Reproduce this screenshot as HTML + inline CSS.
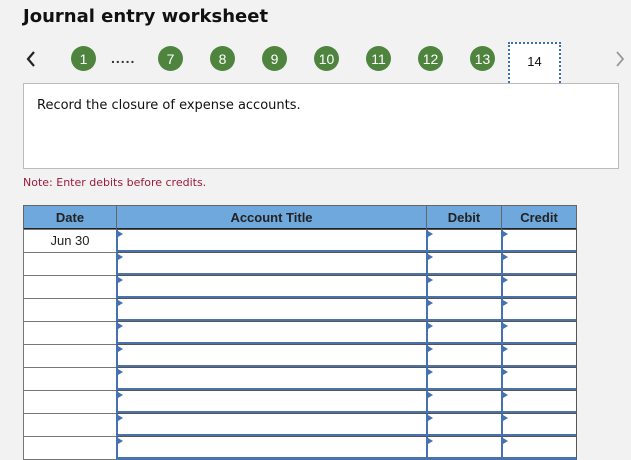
<!DOCTYPE html>
<html><head><meta charset="utf-8"><style>
*{box-sizing:border-box;margin:0;padding:0}
body{width:631px;height:459px;background:#f2f2f2;position:relative;overflow:hidden;font-family:"DejaVu Sans",Verdana,sans-serif}
.a{position:absolute}
.t{left:23px;top:6px;font-weight:bold;font-size:18px;color:#111}
.c{width:25px;height:25px;border-radius:50%;background:#4e843e;color:#fff;font:14px "Liberation Sans",sans-serif;display:flex;align-items:center;justify-content:center;top:46px}
.box{left:23px;top:83px;width:596px;height:86px;background:#fff;border:1px solid #bbb}
.hd{background:#6fa8dc;font:bold 13px "Liberation Sans",sans-serif;color:#222;text-align:center;line-height:23px;border:1px solid #666;border-right:1px solid #222;border-bottom:2px solid #222}
.dc{background:#fff;border:1px solid #777}
.in{background:#fff;border:1px solid #555;border-left:2px solid #4472b4;border-bottom:3px solid #4a72ad}
.in:before{content:"";position:absolute;left:0;top:1px;border-left:5px solid #4472b4;border-top:3px solid transparent;border-bottom:3px solid transparent}
</style></head><body>
<div class="a t">Journal entry worksheet</div>
<svg class="a" style="left:26px;top:51px" width="10" height="16"><path d="M8 1 L2 8 L8 15" fill="none" stroke="#222" stroke-width="2.2"/></svg>
<svg class="a" style="left:615px;top:51px" width="10" height="16"><path d="M2 1 L8 8 L2 15" fill="none" stroke="#999" stroke-width="1.8"/></svg>
<div class="a c" style="left:71px">1</div>
<div class="a" style="left:111px;top:50px;font:bold 14px 'Liberation Sans',sans-serif;color:#333;letter-spacing:1px">.....</div>
<div class="a c" style="left:158px">7</div>
<div class="a c" style="left:210px">8</div>
<div class="a c" style="left:262px">9</div>
<div class="a c" style="left:314px">10</div>
<div class="a c" style="left:366px">11</div>
<div class="a c" style="left:418px">12</div>
<div class="a c" style="left:470px">13</div>
<div class="a" style="left:508px;top:42px;width:53px;height:44px;background:#fff;border:2px dotted #3d6db5;font:13px 'Liberation Sans',sans-serif;text-align:center;line-height:36px;color:#111">14</div>
<div class="a box"></div>
<div class="a" style="left:37px;top:98px;font-size:13px;color:#111">Record the closure of expense accounts.</div>
<div class="a" style="left:23px;top:176px;font-size:11px;color:#9e1b3b">Note: Enter debits before credits.</div>
<div class="a hd" style="left:23px;top:205px;width:94px;height:25px">Date</div>
<div class="a hd" style="left:116px;top:205px;width:311px;height:25px">Account Title</div>
<div class="a hd" style="left:426px;top:205px;width:76px;height:25px">Debit</div>
<div class="a hd" style="left:501px;top:205px;width:76px;height:25px;border-right:1px solid #666">Credit</div>
<div id="rows"></div>
<script>
var h='';for(var i=0;i<10;i++){var y=229+i*23;
h+='<div class="a dc" style="left:23px;top:'+y+'px;width:94px;height:24px;font:13px Liberation Sans,sans-serif;text-align:center;line-height:22px;color:#222">'+(i==0?'Jun 30':'')+'</div>';
h+='<div class="a in" style="left:116px;top:'+y+'px;width:311px;height:24px"></div>';
h+='<div class="a in" style="left:426px;top:'+y+'px;width:76px;height:24px"></div>';
h+='<div class="a in" style="left:501px;top:'+y+'px;width:76px;height:24px"></div>';}
document.getElementById('rows').innerHTML=h;
</script>
</body></html>
